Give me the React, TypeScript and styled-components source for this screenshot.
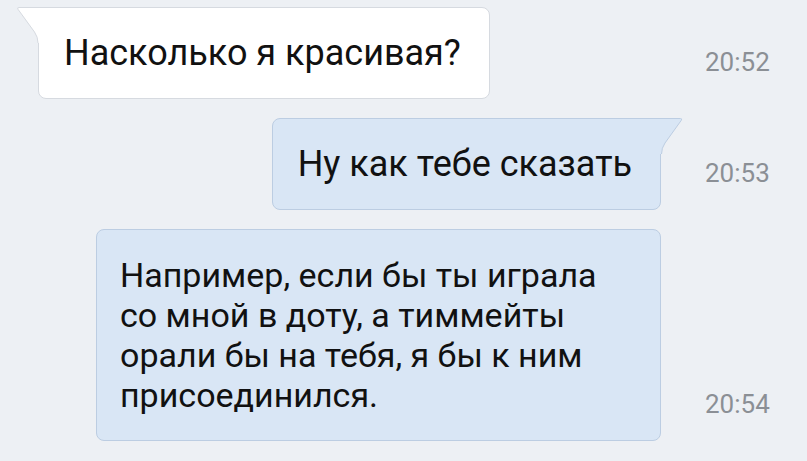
import React, { ReactElement } from "react";
import styled, { createGlobalStyle } from "styled-components";

type MessageType = {
  id: string;
  text: string;
  time: string;
  isOut: boolean;
  hasTail: boolean;
  isWide?: boolean;
};

const MESSAGES: MessageType[] = [
  { id: "1", text: "Насколько я красивая?", time: "20:52", isOut: false, hasTail: true },
  { id: "2", text: "Ну как тебе сказать", time: "20:53", isOut: true, hasTail: true },
  {
    id: "3",
    text: "Например, если бы ты играла\nсо мной в доту, а тиммейты\nорали бы на тебя, я бы к ним\nприсоединился.",
    time: "20:54",
    isOut: true,
    hasTail: false,
    isWide: true,
  },
];

const COLORS = {
  inFill: "#ffffff",
  inBorder: "#d6dae0",
  outFill: "#d9e6f5",
  outBorder: "#bccde2",
};

function Tail({ isOut }: { isOut: boolean }): ReactElement {
  const fill = isOut ? COLORS.outFill : COLORS.inFill;
  const stroke = isOut ? COLORS.outBorder : COLORS.inBorder;

  if (isOut) {
    return (
      <StyledTail $isOut width="26" height="36" viewBox="0 0 26 36">
        <path d="M0 0.5 L22.5 0.5 Q24.5 0.5 23.3 2.3 L7 25 Q3.5 30 3.5 36 L0 36 Z" fill={fill} />
        <path
          d="M0 0.5 L22.5 0.5 Q24.5 0.5 23.3 2.3 L7 25 Q3.5 30 3.5 36"
          fill="none"
          stroke={stroke}
          strokeWidth="1"
        />
      </StyledTail>
    );
  }

  return (
    <StyledTail width="26" height="36" viewBox="0 0 26 36">
      <path d="M26 0.5 L3 0.5 Q0.8 0.5 2 2.3 L18.5 25 Q22 30 22 36 L26 36 Z" fill={fill} />
      <path
        d="M26 0.5 L3 0.5 Q0.8 0.5 2 2.3 L18.5 25 Q22 30 22 36"
        fill="none"
        stroke={stroke}
        strokeWidth="1"
      />
    </StyledTail>
  );
}

function MessageRow({ text, time, isOut, hasTail, isWide }: MessageType): ReactElement {
  return (
    <StyledRow>
      <StyledBubble $isOut={isOut} $hasTail={hasTail} $isWide={isWide}>
        {hasTail && <Tail isOut={isOut} />}
        <StyledText $isWide={isWide}>{text}</StyledText>
      </StyledBubble>
      <StyledTime>{time}</StyledTime>
    </StyledRow>
  );
}

export default function App(): ReactElement {
  return (
    <>
      <GlobalStyle />
      <StyledChat>
        {MESSAGES.map((message) => (
          <MessageRow key={message.id} {...message} />
        ))}
      </StyledChat>
    </>
  );
}

const GlobalStyle = createGlobalStyle`
  html, body {
    margin: 0;
    padding: 0;
    background: #edf0f4;
  }

  body {
    width: 807px;
    height: 461px;
    overflow: hidden;
    font-family: Roboto, "Noto Sans", sans-serif;
  }
`;

const StyledChat = styled.div`
  display: flex;
  flex-direction: column;
  gap: 19px;
  padding: 7px 37px 0 38px;
  box-sizing: border-box;
  width: 807px;
  height: 461px;
  background: #edf0f4;
`;

const StyledRow = styled.div`
  display: grid;
  grid-template-columns: 1fr 65px;
  column-gap: 44px;
  align-items: end;
`;

const StyledBubble = styled.div<{ $isOut: boolean; $hasTail: boolean; $isWide?: boolean }>`
  position: relative;
  justify-self: ${({ $isOut }) => ($isOut ? "end" : "start")};
  width: ${({ $isWide }) => ($isWide ? "565px" : "auto")};
  box-sizing: border-box;
  padding: 25px 28px 25px ${({ $isWide }) => ($isWide ? "23px" : "25px")};
  background: ${({ $isOut }) => ($isOut ? COLORS.outFill : COLORS.inFill)};
  border: 1px solid ${({ $isOut }) => ($isOut ? COLORS.outBorder : COLORS.inBorder)};
  border-radius: 8px;
  ${({ $hasTail, $isOut }) =>
    $hasTail ? ($isOut ? "border-top-right-radius: 0;" : "border-top-left-radius: 0;") : ""}
`;

const StyledTail = styled.svg<{ $isOut?: boolean }>`
  position: absolute;
  top: -1px;
  ${({ $isOut }) => ($isOut ? "right: -24px;" : "left: -23px;")}
  display: block;
`;

const StyledText = styled.p<{ $isWide?: boolean }>`
  margin: 0;
  font-size: ${({ $isWide }) => ($isWide ? "34px" : "36px")};
  line-height: 40px;
  color: #111111;
  white-space: pre-line;
`;

const StyledTime = styled.span`
  margin-bottom: 24px;
  font-size: 26px;
  line-height: 26px;
  color: #8b8f95;
  white-space: nowrap;
`;
